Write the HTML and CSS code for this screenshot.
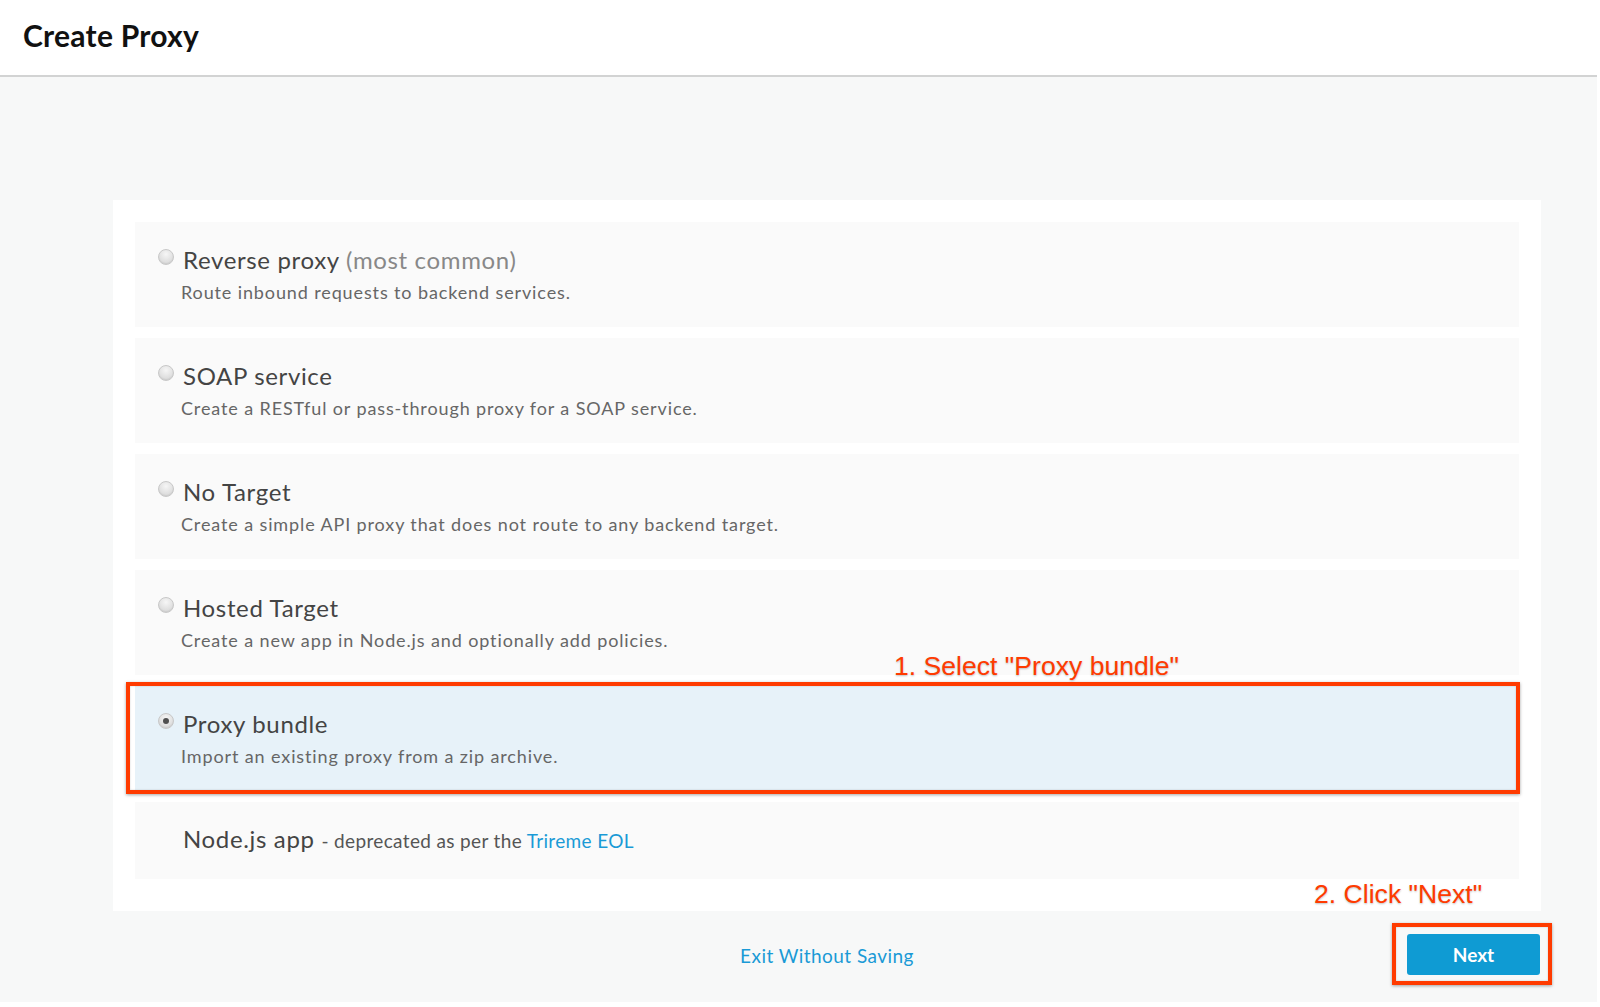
FILE: index.html
```html
<!DOCTYPE html>
<html>
<head>
<meta charset="utf-8">
<title>Create Proxy</title>
<link rel="stylesheet" href="styles.css">
</head>
<body>
<div class="app">
  <header class="topbar"><h1 class="title">Create Proxy</h1></header>
  <main class="content">
    <section class="card">
      <div class="option">
        <span class="radio"></span>
        <div class="option-text">
          <div class="option-title">Reverse proxy <span class="muted">(most common)</span></div>
          <div class="option-desc">Route inbound requests to backend services.</div>
        </div>
      </div>
      <div class="option">
        <span class="radio"></span>
        <div class="option-text">
          <div class="option-title">SOAP service</div>
          <div class="option-desc">Create a RESTful or pass-through proxy for a SOAP service.</div>
        </div>
      </div>
      <div class="option">
        <span class="radio"></span>
        <div class="option-text">
          <div class="option-title">No Target</div>
          <div class="option-desc">Create a simple API proxy that does not route to any backend target.</div>
        </div>
      </div>
      <div class="option">
        <span class="radio"></span>
        <div class="option-text">
          <div class="option-title">Hosted Target</div>
          <div class="option-desc">Create a new app in Node.js and optionally add policies.</div>
        </div>
      </div>
      <div class="option selected">
        <span class="radio checked"></span>
        <div class="option-text">
          <div class="option-title">Proxy bundle</div>
          <div class="option-desc">Import an existing proxy from a zip archive.</div>
        </div>
        <div class="callout callout-box"></div>
        <div class="note note-1">1. Select "Proxy bundle"</div>
      </div>
      <div class="option option-plain">
        <div class="option-text">
          <div class="option-title">Node.js app <span class="small">- deprecated as per the <a class="link" href="#">Trireme EOL</a></span></div>
        </div>
      </div>
      <div class="note note-2">2. Click "Next"</div>
    </section>
    <footer class="footer">
      <a class="exit" href="#">Exit Without Saving</a>
      <div class="next-wrap">
        <button class="next">Next</button>
        <div class="callout callout-next"></div>
      </div>
    </footer>
  </main>
</div>
</body>
</html>
```
FILE: styles.css
```css
html, body {
  margin: 0;
  padding: 0;
  background: #ffffff;
}
body {
  font-family: Lato, "Open Sans", sans-serif;
  width: 1600px;
  height: 1007px;
  overflow: hidden;
}
.app {
  width: 1597px;
  height: 1002px;
  background: #f7f8f8;
  display: flex;
  flex-direction: column;
}
.topbar {
  height: 75px;
  background: #ffffff;
  border-bottom: 2px solid #d2d3d3;
  display: flex;
  align-items: center;
  padding-left: 23px;
  box-sizing: content-box;
}
.title {
  margin: 0;
  font-size: 30px;
  font-weight: 700;
  color: #111;
  letter-spacing: 0.25px;
  position: relative;
  top: -3px;
}
.content {
  padding: 123px 56px 0 113px;
  display: flex;
  flex-direction: column;
}
.card {
  position: relative;
  background: #ffffff;
  width: 1428px;
  box-sizing: border-box;
  padding: 22px 22px 32px 22px;
  display: flex;
  flex-direction: column;
  gap: 11px;
}
.option {
  position: relative;
  background: #fafafa;
  height: 105px;
  box-sizing: border-box;
  padding: 23px 0 0 23px;
  display: flex;
  align-items: flex-start;
  gap: 9px;
}
.option.selected {
  background: #e7f2f9;
}
.option-plain {
  height: 77px;
  padding-left: 48px;
  padding-top: 22px;
}
.radio {
  width: 16px;
  height: 16px;
  border-radius: 50%;
  box-sizing: border-box;
  border: 1px solid #c8c8c8;
  background: radial-gradient(circle at 50% 30%, #f6f6f6 0%, #e0e0e0 60%, #d2d2d2 100%);
  box-shadow: inset 0 -1px 1px rgba(0,0,0,0.06);
  margin-top: 4px;
  flex: none;
  position: relative;
}
.radio.checked::after {
  content: "";
  position: absolute;
  left: 4px;
  top: 4px;
  width: 6px;
  height: 6px;
  border-radius: 50%;
  background: #505050;
}
.option-text {
  display: flex;
  flex-direction: column;
}
.option-title {
  font-size: 24px;
  color: #444;
  line-height: 30px;
  letter-spacing: 0.65px;
}
.muted {
  color: #888;
}
.small {
  font-size: 19px;
  color: #555;
  letter-spacing: 0.35px;
}
.link {
  color: #1a9ad6;
  text-decoration: none;
}
.option-desc {
  font-size: 18px;
  color: #666;
  line-height: 22px;
  margin-top: 6px;
  margin-left: -2px;
  letter-spacing: 0.88px;
}
.footer {
  position: relative;
  height: 88px;
  width: 1428px;
  display: flex;
  align-items: center;
  justify-content: center;
}
.exit {
  font-size: 19px;
  color: #1a9ad6;
  text-decoration: none;
  letter-spacing: 0.45px;
  position: relative;
  top: 0px;
}
.next-wrap {
  position: absolute;
  right: 1px;
  top: 23px;
}
.next {
  width: 133px;
  height: 41px;
  border: none;
  border-radius: 3px;
  background: #0f9bd3;
  color: #fff;
  font-family: Lato, sans-serif;
  font-weight: 700;
  font-size: 19px;
  display: block;
}
.callout {
  position: absolute;
  border: 4px solid #ff3b00;
  box-shadow: 0 1px 3px rgba(0,0,0,0.35), inset 0 0 2px rgba(0,0,0,0.2);
  pointer-events: none;
}
.callout-box {
  left: -9px;
  top: -4px;
  right: -1px;
  bottom: -3px;
}
.callout-next {
  left: -15px;
  top: -11px;
  right: -12px;
  bottom: -10px;
}
.note {
  position: absolute;
  font-family: "Liberation Sans", Arial, sans-serif;
  font-size: 26.6px;
  color: #ff3b00;
  text-shadow: 0 1px 2px rgba(0,0,0,0.25);
  white-space: nowrap;
}
.note-1 {
  left: 759px;
  top: -35px;
}
.note-2 {
  left: 1201px;
  bottom: 1px;
}
```
